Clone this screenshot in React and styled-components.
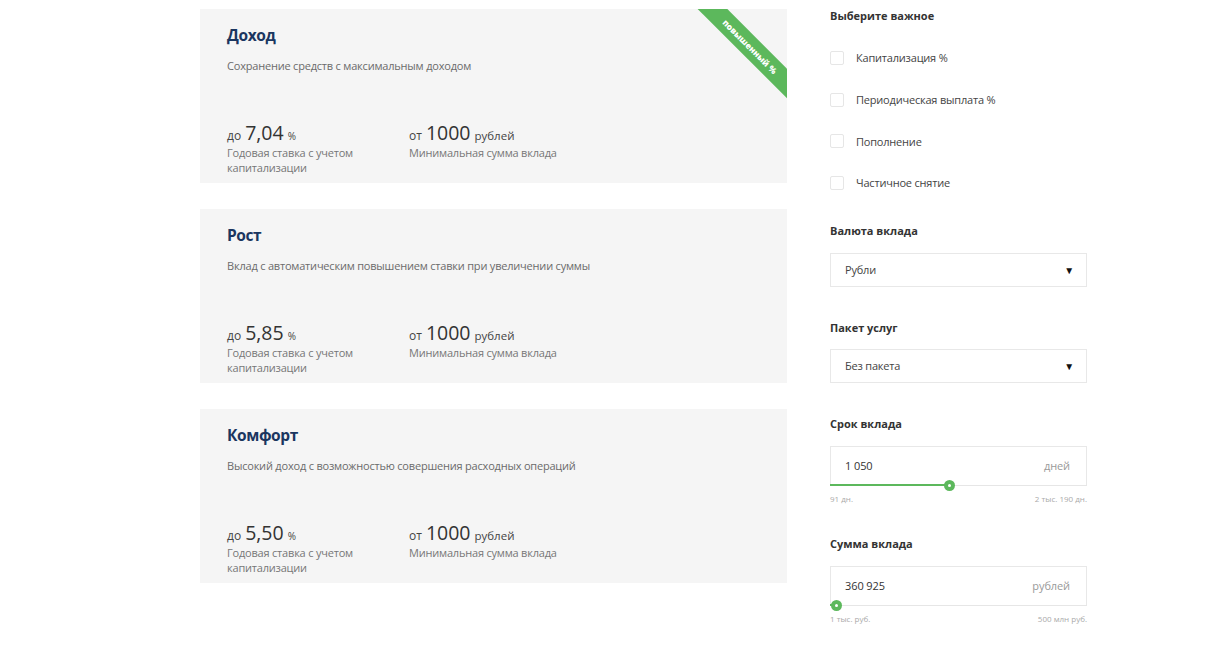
import React from "react";
import styled, { createGlobalStyle } from "styled-components";

const Global = createGlobalStyle`
  html, body { margin: 0; padding: 0; background: #fff; }
  body { font-family: "Open Sans", "Noto Sans", sans-serif; color: #333; }
  * { box-sizing: border-box; }
`;

const Page = styled.div`
  display: flex;
  align-items: flex-start;
  padding-left: 200px;
  width: 1214px;
  height: 646px;
  overflow: hidden;
`;

const Cards = styled.div`
  display: flex;
  flex-direction: column;
  gap: 26px;
  width: 587px;
  padding-top: 9px;
`;

const Card = styled.div`
  position: relative;
  overflow: hidden;
  display: flex;
  flex-direction: column;
  height: 174px;
  background: #f5f5f5;
  padding: 16px 27px 8px;
`;

const Title = styled.div`
  font-size: 15.5px;
  line-height: 20px;
  font-weight: 700;
  letter-spacing: -0.4px;
  color: #1b3660;
`;

const Desc = styled.div`
  margin-top: 13px;
  font-size: 11px;
  line-height: 16px;
  letter-spacing: -0.2px;
  color: #6b6b6b;
`;

const Stats = styled.div`
  margin-top: auto;
  display: flex;
`;

const Stat = styled.div`
  width: ${(p) => p.$w}px;
`;

const Value = styled.div`
  display: flex;
  align-items: baseline;
  gap: 4px;
  height: 22px;
  line-height: 20px;
  color: #333;
`;

const Small = styled.span`
  font-size: ${(p) => p.$size}px;
  color: #444;
`;

const Big = styled.span`
  font-size: 19.5px;
  line-height: 20px;
  color: #333;
`;

const StatLabel = styled.div`
  font-size: 11px;
  line-height: 15px;
  letter-spacing: -0.2px;
  color: #777;
  max-width: ${(p) => (p.$wide ? 180 : 140)}px;
`;

const Ribbon = styled.div`
  position: absolute;
  top: 27px;
  right: -33px;
  width: 140px;
  height: 21px;
  background: #5cb85c;
  color: #fff;
  font-size: 8.5px;
  font-weight: 800;
  line-height: 21px;
  text-align: center;
  transform: rotate(45deg);
`;

const Side = styled.div`
  margin-left: 43px;
  width: 257px;
  display: flex;
  flex-direction: column;
  padding-top: 8px;
`;

const Heading = styled.div`
  font-size: 11px;
  line-height: 16px;
  font-weight: 700;
  color: #333;
  margin-top: ${(p) => p.$mt || 0}px;
`;

const CheckList = styled.div`
  margin-top: 13px;
  display: flex;
  flex-direction: column;
`;

const CheckRow = styled.label`
  display: flex;
  align-items: center;
  gap: 12px;
  height: 41.7px;
  font-size: 11px;
  letter-spacing: -0.2px;
  color: #444;
`;

const Box = styled.span`
  width: 14px;
  height: 14px;
  border: 1px solid #e6e6e6;
  border-radius: 2px;
  background: #fff;
`;

const Select = styled.div`
  margin-top: ${(p) => p.$mt}px;
  height: 34px;
  border: 1px solid #e8e8e8;
  display: flex;
  align-items: center;
  justify-content: space-between;
  padding: 0 12px 0 14px;
  font-size: 11px;
  letter-spacing: -0.2px;
  color: #444;
`;

const Arrow = styled.span`
  font-size: 10px;
  color: #111;
`;

const InputBox = styled.div`
  position: relative;
  margin-top: 14px;
  height: 40px;
  border: 1px solid #e8e8e8;
  border-bottom: none;
  display: flex;
  align-items: center;
  justify-content: space-between;
  padding: 0 16px 2px 14px;
  font-size: 11px;
  letter-spacing: -0.1px;
`;

const InputValue = styled.span`
  color: #333;
`;

const Unit = styled.span`
  color: #9a9a9a;
`;

const Track = styled.div`
  position: absolute;
  left: -1px;
  right: -1px;
  bottom: 0;
  height: 1px;
  background: #e6e6e6;
`;

const Fill = styled.div`
  position: absolute;
  left: 0;
  top: 0;
  height: 2px;
  margin-top: -0.5px;
  background: #5cb85c;
`;

const Thumb = styled.div`
  position: absolute;
  top: -5px;
  width: 11px;
  height: 11px;
  margin-left: -5.5px;
  border-radius: 50%;
  background: #5cb85c;
  display: flex;
  align-items: center;
  justify-content: center;
  &::after {
    content: "";
    width: 3px;
    height: 3px;
    border-radius: 50%;
    background: #fff;
  }
`;

const Range = styled.div`
  display: flex;
  justify-content: space-between;
  margin-top: 8px;
  font-size: 8px;
  line-height: 10px;
  color: #aaa;
`;

const products = [
  {
    title: "Доход",
    desc: "Сохранение средств с максимальным доходом",
    rate: "7,04",
    ribbon: true,
  },
  {
    title: "Рост",
    desc: "Вклад с автоматическим повышением ставки при увеличении суммы",
    rate: "5,85",
  },
  {
    title: "Комфорт",
    desc: "Высокий доход с возможностью совершения расходных операций",
    rate: "5,50",
  },
];

const checks = [
  "Капитализация %",
  "Периодическая выплата %",
  "Пополнение",
  "Частичное снятие",
];

function Slider({ value, unit, pos, min, max }) {
  return (
    <>
      <InputBox>
        <InputValue>{value}</InputValue>
        <Unit>{unit}</Unit>
        <Track>
          <Fill style={{ width: pos }} />
          <Thumb style={{ left: pos + 1 }} />
        </Track>
      </InputBox>
      <Range>
        <span>{min}</span>
        <span>{max}</span>
      </Range>
    </>
  );
}

export default function App() {
  return (
    <>
      <Global />
      <Page>
        <Cards>
          {products.map((p) => (
            <Card key={p.title}>
              {p.ribbon && <Ribbon>повышенный %</Ribbon>}
              <Title>{p.title}</Title>
              <Desc>{p.desc}</Desc>
              <Stats>
                <Stat $w={182}>
                  <Value>
                    <Small $size={12}>до</Small>
                    <Big>{p.rate}</Big>
                    <Small $size={10}>%</Small>
                  </Value>
                  <StatLabel>Годовая ставка с учетом капитализации</StatLabel>
                </Stat>
                <Stat $w={200}>
                  <Value>
                    <Small $size={12}>от</Small>
                    <Big>1000</Big>
                    <Small $size={11.5}>рублей</Small>
                  </Value>
                  <StatLabel $wide>Минимальная сумма вклада</StatLabel>
                </Stat>
              </Stats>
            </Card>
          ))}
        </Cards>
        <Side>
          <Heading>Выберите важное</Heading>
          <CheckList>
            {checks.map((c) => (
              <CheckRow key={c}>
                <Box />
                {c}
              </CheckRow>
            ))}
          </CheckList>
          <Heading $mt={19}>Валюта вклада</Heading>
          <Select $mt={14}>
            <span>Рубли</span>
            <Arrow>▼</Arrow>
          </Select>
          <Heading $mt={33}>Пакет услуг</Heading>
          <Select $mt={13}>
            <span>Без пакета</span>
            <Arrow>▼</Arrow>
          </Select>
          <Heading $mt={33}>Срок вклада</Heading>
          <Slider value="1 050" unit="дней" pos={118} min="91 дн." max="2 тыс. 190 дн." />
          <Heading $mt={32}>Сумма вклада</Heading>
          <Slider value="360 925" unit="рублей" pos={5} min="1 тыс. руб." max="500 млн руб." />
        </Side>
      </Page>
    </>
  );
}
